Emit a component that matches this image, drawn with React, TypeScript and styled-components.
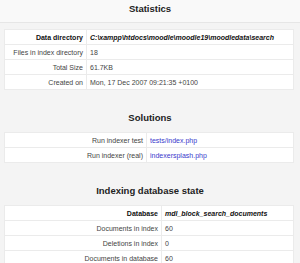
import styled, { createGlobalStyle } from "styled-components";

const GlobalStyle = createGlobalStyle`
  body {
    margin: 0;
    background: #f4f4f4;
    font-family: "Liberation Sans", Arial, sans-serif;
    color: #333;
  }
`;

type Row = { label: string; value: string; link?: boolean; strong?: boolean };

const sections: { title: string; labelWidth: number; rows: Row[] }[] = [
  {
    title: "Statistics",
    labelWidth: 82,
    rows: [
      { label: "Data directory", value: "C:\\xampp\\htdocs\\moodle\\moodle19\\moodledata\\search", strong: true },
      { label: "Files in index directory", value: "18" },
      { label: "Total Size", value: "61.7KB" },
      { label: "Created on", value: "Mon, 17 Dec 2007 09:21:35 +0100" },
    ],
  },
  {
    title: "Solutions",
    labelWidth: 142,
    rows: [
      { label: "Run indexer test", value: "tests/index.php", link: true },
      { label: "Run indexer (real)", value: "indexersplash.php", link: true },
    ],
  },
  {
    title: "Indexing database state",
    labelWidth: 157,
    rows: [
      { label: "Database", value: "mdl_block_search_documents", strong: true },
      { label: "Documents in index", value: "60" },
      { label: "Deletions in index", value: "0" },
      { label: "Documents in database", value: "60" },
    ],
  },
];

const App = () => {
  return (
    <Page>
      <GlobalStyle />
      {sections.map((section, idx) => (
        <Section key={section.title}>
          <Heading $first={idx === 0}>{section.title}</Heading>
          <Table>
            <colgroup>
              <col style={{ width: section.labelWidth }} />
              <col />
            </colgroup>
            <tbody>
              {section.rows.map((row) => (
                <tr key={row.label}>
                  <Label $strong={row.strong}>{row.label}</Label>
                  <Value $strong={row.strong}>
                    {row.link ? <Link href="#">{row.value}</Link> : row.value}
                  </Value>
                </tr>
              ))}
            </tbody>
          </Table>
        </Section>
      ))}
    </Page>
  );
};

const Page = styled.div`
  display: flex;
  flex-direction: column;
  width: 300px;
  height: 263px;
  overflow: hidden;
`;

const Section = styled.div`
  display: flex;
  flex-direction: column;
  padding: 0 6px 0 4px;
`;

const Heading = styled.h2<{ $first?: boolean }>`
  margin: ${({ $first }) => ($first ? "0 -6px 6px -4px" : "17px -6px 4px -4px")};
  height: ${({ $first }) => ($first ? "22px" : "21px")};
  line-height: ${({ $first }) => ($first ? "17px" : "21px")};
  flex-shrink: 0;
  text-align: center;
  font-size: 9.5px;
  font-weight: bold;
  color: #222;
  background: ${({ $first }) => ($first ? "#f9f9f9" : "transparent")};
  border-bottom: ${({ $first }) => ($first ? "1px solid #e6e6e6" : "none")};
`;

const Table = styled.table`
  width: 100%;
  table-layout: fixed;
  border-collapse: collapse;
  background: #fff;
  border: 1px solid #ebebeb;
  font-size: 7px;

  td {
    height: 14px;
    padding: 0 3px;
    border-top: 1px solid #ebebeb;
    white-space: nowrap;
    overflow: hidden;
  }
`;

const Label = styled.td<{ $strong?: boolean }>`
  text-align: right;
  border-right: 1px solid #ebebeb;
  color: ${({ $strong }) => ($strong ? "#111" : "#444")};
  font-weight: ${({ $strong }) => ($strong ? "bold" : "normal")};
`;

const Value = styled.td<{ $strong?: boolean }>`
  text-align: left;
  color: ${({ $strong }) => ($strong ? "#111" : "#444")};
  font-weight: ${({ $strong }) => ($strong ? "bold" : "normal")};
  font-style: ${({ $strong }) => ($strong ? "italic" : "normal")};
`;

const Link = styled.a`
  color: #3a3acc;
  text-decoration: none;
`;

export default App;
